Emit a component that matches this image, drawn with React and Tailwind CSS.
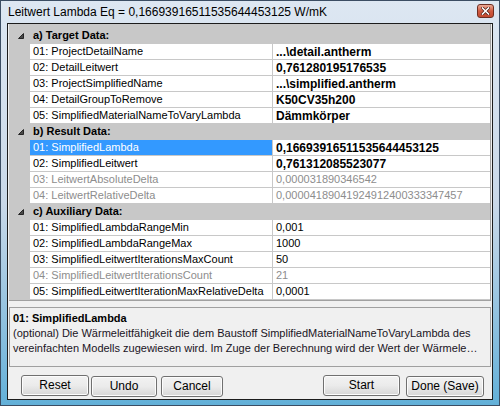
import React from 'react';

const Triangle = () => (
    <svg width="6" height="6" viewBox="0 0 6 6" className="block">
        <polygon points="5.5,0.5 5.5,5.5 0.5,5.5" fill="#4a4a4a" stroke="#262626" strokeWidth="1" />
    </svg>
);

const sections = [
    {
        title: 'a) Target Data:',
        rows: [
            { name: '01: ProjectDetailName', value: '...\\detail.antherm', bold: true },
            { name: '02: DetailLeitwert', value: '0,761280195176535', bold: true },
            { name: '03: ProjectSimplifiedName', value: '...\\simplified.antherm', bold: true },
            { name: '04: DetailGroupToRemove', value: 'K50CV35h200', bold: true },
            { name: '05: SimplifiedMaterialNameToVaryLambda', value: 'Dämmkörper', bold: true },
        ],
    },
    {
        title: 'b) Result Data:',
        rows: [
            { name: '01: SimplifiedLambda', value: '0,16693916511535644453125', bold: true, selected: true },
            { name: '02: SimplifiedLeitwert', value: '0,761312085523077', bold: true },
            { name: '03: LeitwertAbsoluteDelta', value: '0,000031890346542', disabled: true },
            { name: '04: LeitwertRelativeDelta', value: '0,00004189041924912400333347457', disabled: true },
        ],
    },
    {
        title: 'c) Auxiliary Data:',
        rows: [
            { name: '01: SimplifiedLambdaRangeMin', value: '0,001' },
            { name: '02: SimplifiedLambdaRangeMax', value: '1000' },
            { name: '03: SimplifiedLeitwertIterationsMaxCount', value: '50' },
            { name: '04: SimplifiedLeitwertIterationsCount', value: '21', disabled: true },
            { name: '05: SimplifiedLeitwertIterationMaxRelativeDelta', value: '0,0001' },
        ],
    },
];

const Button = ({ label, width }) => (
    <button
        className={`${width} h-[21px] rounded-[3px] border border-[#707070] bg-gradient-to-b from-[#f2f2f2] via-[#ebebeb] to-[#d6d6d6] text-[12px] leading-none text-black shadow-[inset_0_0_0_1px_#fcfcfc]`}
    >
        {label}
    </button>
);

export default function App() {
    return (
        <div className="w-[500px] h-[406px] flex flex-col border border-[#3b4d63] bg-gradient-to-b from-[#dde7f2] via-[#c9d8e8] to-[#62b0d8] font-['Liberation_Sans',Arial,sans-serif] text-black select-none">
            {/* Title bar */}
            <div className="h-[22px] flex items-center pl-[7px] pr-[5px]">
                <span className="text-[12px] leading-none text-black">
                    Leitwert Lambda Eq = 0,16693916511535644453125 W/mK
                </span>
                <div className="flex-1" />
                <div className="mt-[-3px] w-[17px] h-[14px] rounded-[3px] border border-[#6e2e22] bg-gradient-to-b from-[#eaa996] via-[#d05a40] to-[#c24a30] flex items-center justify-center">
                    <svg width="9" height="8" viewBox="0 0 9 8">
                        <path d="M1.5 1 L7.5 7 M7.5 1 L1.5 7" stroke="#4a1a10" strokeWidth="3" strokeLinecap="square" />
                        <path d="M1.5 1 L7.5 7 M7.5 1 L1.5 7" stroke="#ffffff" strokeWidth="1.6" strokeLinecap="square" />
                    </svg>
                </div>
            </div>

            {/* Client area */}
            <div className="flex-1 flex flex-col mx-[6px] mb-[5px] border border-[#1c1c1c] bg-[#f0f0f0]">
                {/* Property grid */}
                <div className="mx-[1px] bg-[#c8c8c8] pt-[4px] border-r border-b border-[#a0a0a0] text-[11px]">
                    {sections.map((sec) => (
                        <div key={sec.title}>
                            <div className="h-[16px] flex items-center border-b border-[#c8c8c8]">
                                <div className="w-[21px] flex justify-end pr-[6px]">
                                    <Triangle />
                                </div>
                                <span className="pl-[3px] font-bold leading-none">{sec.title}</span>
                            </div>
                            {sec.rows.map((row) => (
                                <div key={row.name} className="h-[16px] flex">
                                    <div className="w-[21px]" />
                                    <div
                                        className={`w-[243px] flex items-center pl-[3px] border-r border-b border-[#c8c8c8] whitespace-nowrap overflow-hidden ${row.selected ? 'bg-[#3399ff] text-white' : 'bg-white'} ${row.disabled ? 'text-[#8d8d8d]' : ''}`}
                                    >
                                        {row.name}
                                    </div>
                                    <div
                                        className={`flex-1 flex items-center pl-[3px] bg-white border-b border-[#c8c8c8] whitespace-nowrap overflow-hidden ${row.bold ? 'font-bold text-[12px]' : ''} ${row.disabled ? 'text-[#8d8d8d]' : ''}`}
                                    >
                                        {row.value}
                                    </div>
                                </div>
                            ))}
                        </div>
                    ))}
                </div>

                {/* Description panel */}
                <div className="mt-[6px] mx-[1px] h-[60px] border border-[#a0a0a0] pt-[3px] px-[3px] text-[11px] leading-[15px]">
                    <div className="font-bold">01: SimplifiedLambda</div>
                    <div className="whitespace-nowrap text-[#1a1424]">
                        (optional) Die Wärmeleitfähigkeit die dem Baustoff SimplifiedMaterialNameToVaryLambda des
                    </div>
                    <div className="whitespace-nowrap text-[#1a1424]">
                        vereinfachten Modells zugewiesen wird. Im Zuge der Berechnung wird der Wert der Wärmele…
                    </div>
                </div>

                {/* Buttons */}
                <div className="mt-[6px] flex items-center pl-[13px] pr-[8px]">
                    <Button label="Reset" width="w-[68px]" />
                    <div className="ml-[2px]">
                        <Button label="Undo" width="w-[66px]" />
                    </div>
                    <div className="ml-[4px]">
                        <Button label="Cancel" width="w-[62px]" />
                    </div>
                    <div className="flex-1" />
                    <Button label="Start" width="w-[77px]" />
                    <div className="ml-[6px]">
                        <Button label="Done (Save)" width="w-[78px]" />
                    </div>
                </div>
            </div>
        </div>
    );
}
